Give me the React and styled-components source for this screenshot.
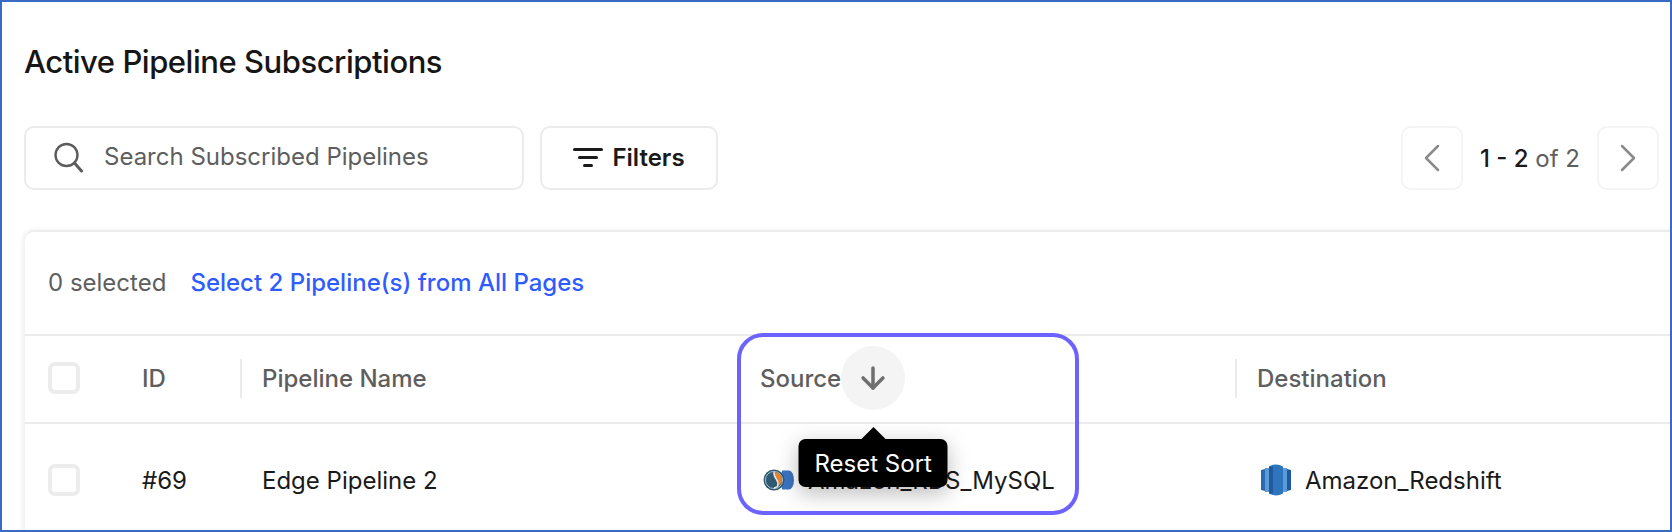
import React from 'react';
import styled, { createGlobalStyle } from 'styled-components';
import { ArrowDown, ChevronLeft, ChevronRight } from 'lucide-react';

const GlobalStyle = createGlobalStyle`
  html, body {
    margin: 0;
    padding: 0;
    background: #fff;
  }
  body {
    font-family: Inter, "Noto Sans", "Liberation Sans", sans-serif;
    color: #1a1a1a;
  }
`;

const SearchIcon = () => (
  <svg width="32" height="32" viewBox="0 0 32 32" fill="none" stroke="#5c5c5c" strokeWidth="2.4" strokeLinecap="round">
    <circle cx="14.5" cy="14" r="11" />
    <path d="M22.5 22l7 8" strokeWidth="3" />
  </svg>
);

const FilterIcon = () => (
  <svg width="30" height="24" viewBox="0 0 30 24" fill="#1a1a1a">
    <rect x="0" y="3" width="30" height="3" rx="1.5" />
    <rect x="5" y="11" width="20" height="3" rx="1.5" />
    <rect x="10" y="19" width="10" height="3" rx="1.5" />
  </svg>
);

const SourceLogo = () => (
  <svg width="32" height="22" viewBox="0 0 32 22">
    <path d="M19 1.5h7a5 9.5 0 0 1 5 9.5 5 9.5 0 0 1-5 9.5h-7z" fill="#3b74c2" />
    <circle cx="11" cy="11" r="10.5" fill="#2f5a72" />
    <circle cx="11" cy="11" r="8.6" fill="none" stroke="#a9bcc8" strokeWidth="1" />
    <path d="M11 3c5 0 8 3.5 8 8 0 3-2 5-4.5 6.5 1-3 .5-5-1-7S10.500 6.500 11 3z" fill="#e5852f" />
    <path d="M11 3c-.5 3.500 1 5.500 2.500 7.500s2 4 1 7c-1 .8-2.300 1.300-3.500 1.500" fill="none" stroke="#e9eef2" strokeWidth="1.300" />
  </svg>
);

const RedshiftLogo = () => (
  <svg width="30" height="32" viewBox="0 0 30 32">
    <path d="M0 6l4-1v22l-4-1z" fill="#2a6bb0" />
    <rect x="4" y="4" width="4" height="24" fill="#5a9bd8" />
    <path d="M8 2.5q7-4 14 0v27q-7 4-14 0z" fill="#2f75bb" />
    <rect x="8" y="2.500" width="4" height="27" fill="#1f5b9c" />
    <rect x="22" y="4" width="4" height="24" fill="#5a9bd8" />
    <path d="M26 5l4 1v20l-4 1z" fill="#1f5b9c" />
  </svg>
);

const App = () => {
  const columns = [
    { name: 'ID' },
    { name: 'Pipeline Name', divider: true },
    { name: 'Source', sorted: true },
    { name: 'Destination', divider: true },
  ];

  return (
    <>
      <GlobalStyle />
      <Frame>
        <Title>Active Pipeline Subscriptions</Title>
        <Toolbar>
          <SearchBox>
            <SearchIcon />
            <SearchText>Search Subscribed Pipelines</SearchText>
          </SearchBox>
          <FilterButton>
            <FilterIcon />
            Filters
          </FilterButton>
          <Pager>
            <PageButton><ChevronLeft size={48} strokeWidth={1.25} /></PageButton>
            <PageLabel><b>1 - 2</b> of 2</PageLabel>
            <PageButton><ChevronRight size={48} strokeWidth={1.25} /></PageButton>
          </Pager>
        </Toolbar>
        <Card>
          <SelectionBar>
            <SelectedCount>0 selected</SelectedCount>
            <SelectAll>Select 2 Pipeline(s) from All Pages</SelectAll>
          </SelectionBar>
          <HeaderRow>
            <CheckCell><Checkbox /></CheckCell>
            {columns.map((col) => (
              <HeaderCell key={col.name}>
                {col.divider && <ColumnDivider />}
                <HeaderLabel $indent={col.divider ? 20 : col.sorted ? 23 : 0}>{col.name}</HeaderLabel>
                {col.sorted && (
                  <SortButton>
                    <ArrowDown size={34} strokeWidth={2.5} />
                    <Tooltip>Reset Sort</Tooltip>
                  </SortButton>
                )}
              </HeaderCell>
            ))}
          </HeaderRow>
          <BodyRow>
            <CheckCell><Checkbox /></CheckCell>
            <BodyCell>#69</BodyCell>
            <BodyCell $indented>Edge Pipeline 2</BodyCell>
            <BodyCell $indented>
              <LogoSlot $gap={13}><SourceLogo /></LogoSlot>
              Amazon_RDS_MySQL
            </BodyCell>
            <BodyCell $indented>
              <LogoSlot $gap={14}><RedshiftLogo /></LogoSlot>
              Amazon_Redshift
            </BodyCell>
          </BodyRow>
        </Card>
        <Highlight />
      </Frame>
    </>
  );
};

const Frame = styled.div`
  position: relative;
  box-sizing: border-box;
  width: 1672px;
  height: 532px;
  border: 2px solid #3a6bc4;
  overflow: hidden;
  background: #fff;
`;

const Title = styled.h1`
  margin: 0;
  padding: 42px 0 0 22px;
  font-size: 31px;
  line-height: 36px;
  font-weight: 500;
  letter-spacing: -0.47px;
  color: #161616;
`;

const Toolbar = styled.div`
  display: flex;
  align-items: center;
  gap: 16px;
  margin-top: 46px;
  padding: 0 11px 0 22px;
`;

const SearchBox = styled.div`
  box-sizing: border-box;
  display: flex;
  align-items: center;
  gap: 20px;
  width: 500px;
  height: 64px;
  padding: 0 26px 3px;
  border: 2px solid #ebebeb;
  border-radius: 10px;
`;

const SearchText = styled.span`
  font-size: 24px;
  color: #5e5e5e;
`;

const FilterButton = styled.div`
  box-sizing: border-box;
  display: flex;
  align-items: center;
  justify-content: center;
  gap: 9px;
  width: 178px;
  height: 64px;
  padding-bottom: 2px;
  border: 2px solid #ebebeb;
  border-radius: 10px;
  font-size: 24px;
  font-weight: 600;
  color: #1a1a1a;
`;

const Pager = styled.div`
  display: flex;
  align-items: center;
  gap: 17px;
  margin-left: auto;
`;

const PageButton = styled.div`
  box-sizing: border-box;
  display: flex;
  align-items: center;
  justify-content: center;
  width: 62px;
  height: 64px;
  border: 2px solid #f4f4f4;
  border-radius: 10px;
  color: #8a8a8a;
`;

const PageLabel = styled.span`
  font-size: 24px;
  color: #5e5e5e;
  b {
    font-weight: 500;
    color: #1a1a1a;
  }
`;

const Card = styled.div`
  box-sizing: border-box;
  width: 1700px;
  margin: 40px 0 0 23px;
  border-radius: 10px 0 0 0;
  border-top: 2px solid #ececec;
  background: #fff;
  box-shadow: -2px 0 5px rgba(0, 0, 0, 0.07);
`;

const SelectionBar = styled.div`
  display: flex;
  align-items: center;
  gap: 24px;
  height: 100px;
  padding: 0 0 2px 23px;
  font-size: 24px;
`;

const SelectedCount = styled.span`
  color: #5e5e5e;
`;

const SelectAll = styled.span`
  color: #2f5cff;
  font-weight: 500;
`;

const HeaderRow = styled.div`
  box-sizing: border-box;
  display: grid;
  grid-template-columns: 117px 98px 497px 498px 1fr;
  height: 90px;
  padding-bottom: 2px;
  border-top: 2px solid #ebebeb;
  border-bottom: 2px solid #ebebeb;
`;

const BodyRow = styled.div`
  display: grid;
  grid-template-columns: 117px 98px 497px 498px 1fr;
  height: 112px;
`;

const CheckCell = styled.div`
  display: flex;
  align-items: center;
  padding-left: 23px;
`;

const Checkbox = styled.div`
  box-sizing: border-box;
  width: 32px;
  height: 32px;
  border: 4px solid #ececec;
  border-radius: 7px;
`;

const HeaderCell = styled.div`
  display: flex;
  align-items: center;
`;

const ColumnDivider = styled.span`
  width: 2px;
  height: 39px;
  background: #ebebeb;
`;

const HeaderLabel = styled.span`
  margin-left: ${(props) => props.$indent}px;
  font-size: 24px;
  font-weight: 500;
  color: #5e5e5e;
`;

const SortButton = styled.div`
  position: relative;
  display: flex;
  align-items: center;
  justify-content: center;
  width: 64px;
  height: 64px;
  border-radius: 50%;
  background: #f4f4f4;
  color: #6f6f6f;
`;

const Tooltip = styled.div`
  position: absolute;
  top: 93px;
  left: 50%;
  transform: translateX(-50%);
  box-sizing: border-box;
  width: 149px;
  height: 48px;
  display: flex;
  align-items: center;
  justify-content: center;
  background: #000;
  border-radius: 7px;
  color: #fff;
  font-size: 24px;
  white-space: nowrap;
  box-shadow: 0 6px 22px rgba(0, 0, 0, 0.28);
  z-index: 2;

  &::before {
    content: '';
    position: absolute;
    top: -12px;
    left: 50%;
    transform: translateX(-50%);
    border-left: 12px solid transparent;
    border-right: 12px solid transparent;
    border-bottom: 12px solid #000;
  }
`;

const BodyCell = styled.div`
  display: flex;
  align-items: center;
  padding-left: ${(props) => (props.$indented ? '22px' : '0')};
  font-size: 24px;
  color: #1a1a1a;
`;

const LogoSlot = styled.span`
  display: flex;
  margin-left: 4px;
  margin-right: ${(props) => props.$gap}px;
`;

const Highlight = styled.div`
  position: absolute;
  left: 734.5px;
  top: 331px;
  width: 342.5px;
  height: 182px;
  box-sizing: border-box;
  border: 4px solid #6c63ff;
  border-radius: 26px;
  pointer-events: none;
`;

export default App;
